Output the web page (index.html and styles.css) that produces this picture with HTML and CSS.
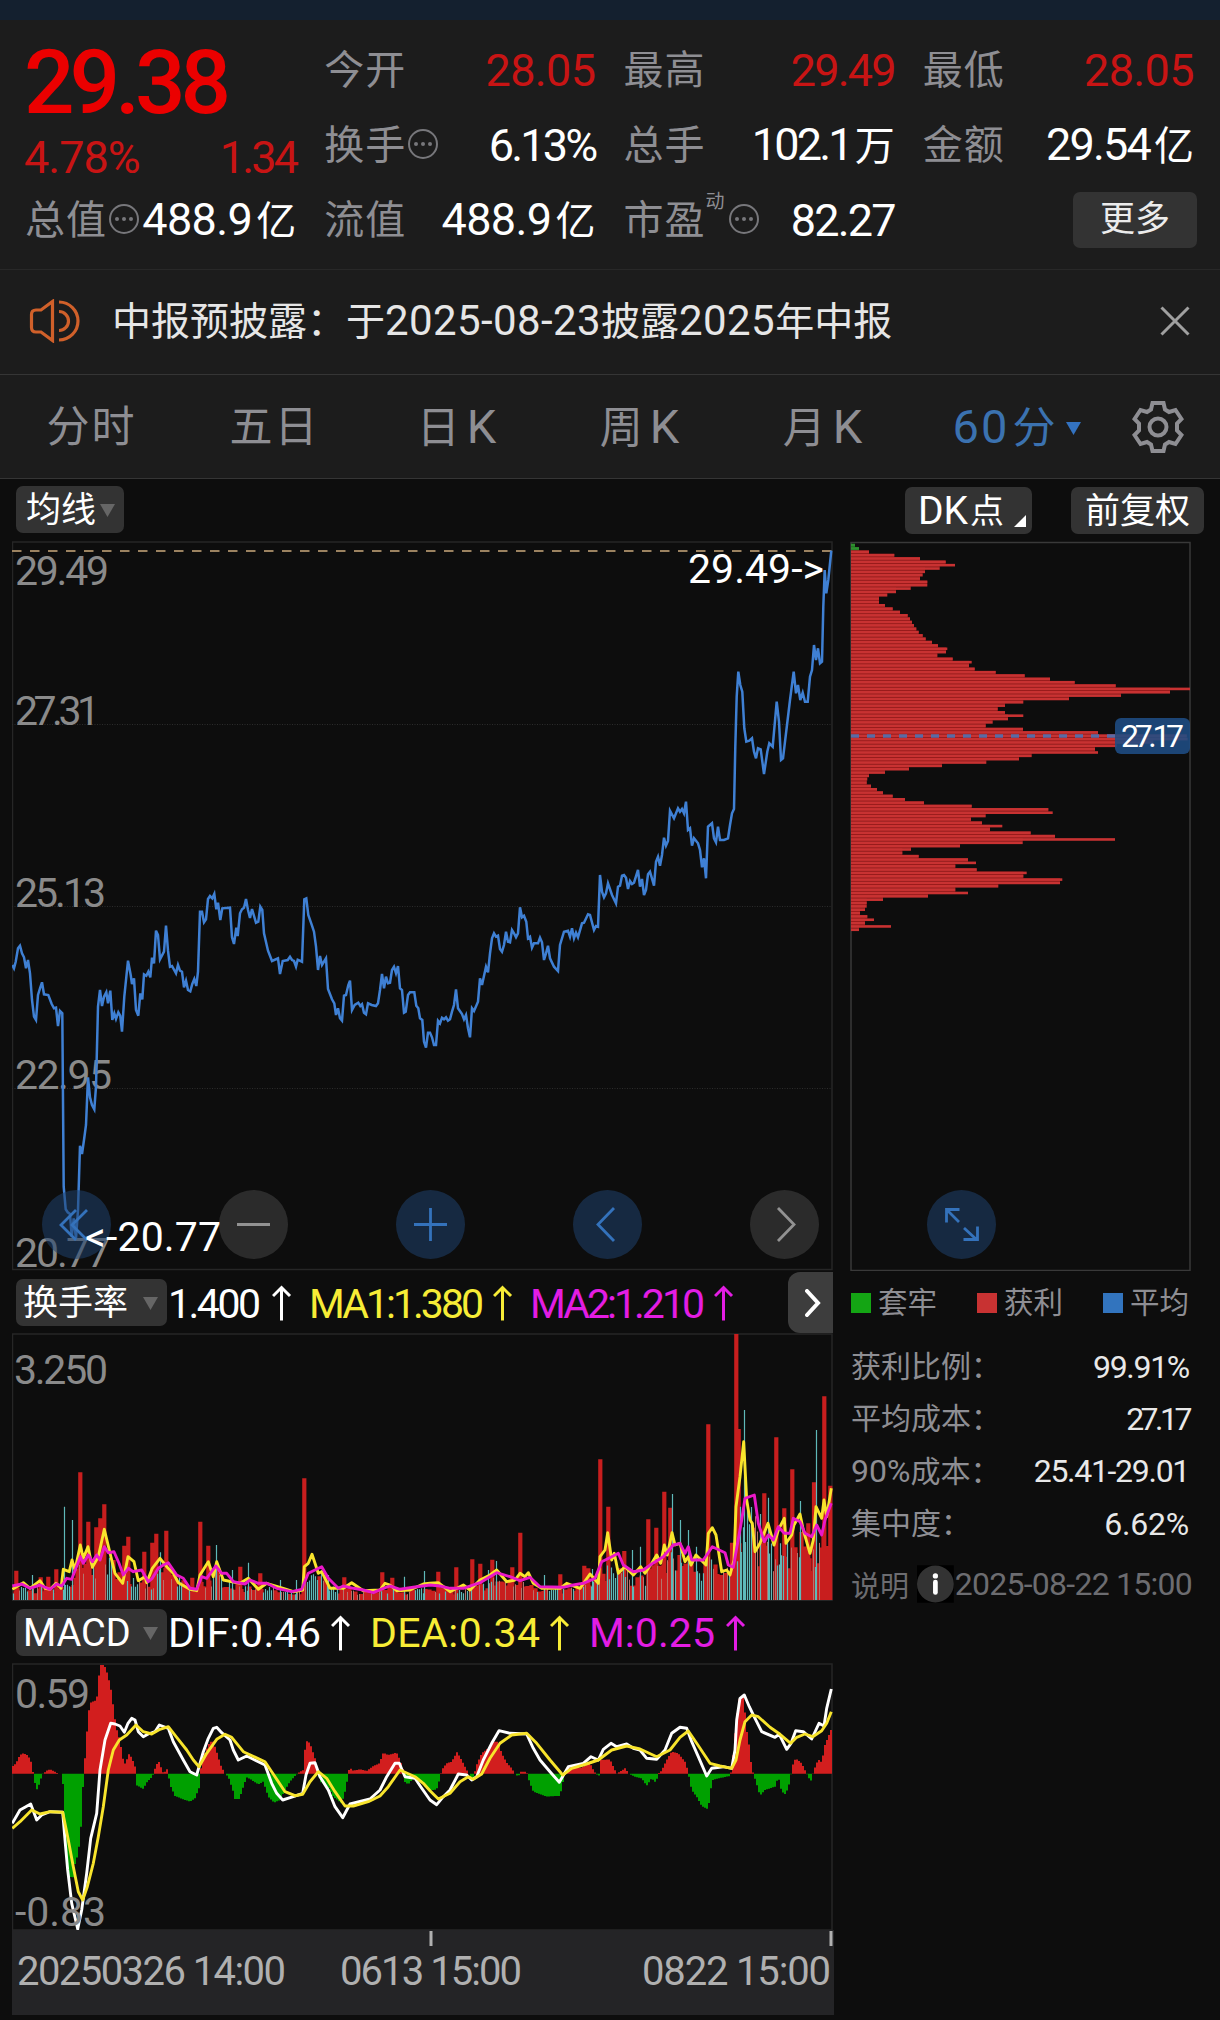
FILE: index.html
```html
<!DOCTYPE html>
<html lang="zh-CN">
<head>
  <meta charset="UTF-8" />
  <meta name="viewport" content="width=device-width, initial-scale=1.0"/>
  <title>60分 K线</title>
  <link rel="stylesheet" href="styles.css">
</head>
<body>
  <div class="status-strip"></div>

  <section class="quote">
    <div class="price-box">
      <div class="price">29.38</div>
      <div class="change"><span>4.78%</span><span class="tight">1.34</span></div>
    </div>
    <div class="cell"><span class="label">今开</span><span class="value up">28.05</span></div>
    <div class="cell"><span class="label">最高</span><span class="value up narrow">29.49</span></div>
    <div class="cell"><span class="label">最低</span><span class="value up">28.05</span></div>
    <div class="cell"><span class="label">换手</span><svg class="dots" viewBox="0 0 32 32"><use href="#dots"/></svg><span class="value tight">6.13%</span></div>
    <div class="cell"><span class="label">总手</span><span class="value tight">102.1<b>万</b></span></div>
    <div class="cell"><span class="label">金额</span><span class="value narrow">29.54<b>亿</b></span></div>
    <div class="cell"><span class="label">总值</span><svg class="dots" viewBox="0 0 32 32"><use href="#dots"/></svg><span class="value">488.9<b>亿</b></span></div>
    <div class="cell"><span class="label">流值</span><span class="value">488.9<b>亿</b></span></div>
    <div class="cell"><span class="label">市盈<sup>动</sup></span><svg class="dots" viewBox="0 0 32 32"><use href="#dots"/></svg><span class="value narrow">82.27</span></div>
    <div class="cell cell-end"><button class="more">更多</button></div>
  </section>

  <section class="notice">
    <svg class="speaker" viewBox="0 0 52 44">
      <path d="M2.5 15.5Q2.5 11 7 11H12L23.5 2.5V41.500L12 33H7Q2.500 33 2.500 28.500Z"/>
      <path d="M30 12.500A9.500 9.500 0 0 1 30 31.500M30 3A19 19 0 0 1 30 41"/>
    </svg>
    <p>中报预披露：于<span>2025-08-23</span>披露<span>2025</span>年中报</p>
    <svg class="close" viewBox="0 0 30 30"><path d="M1.500 1.500L28.500 28.500M28.500 1.500L1.500 28.500"/></svg>
  </section>

  <nav class="tabs">
    <a>分时</a>
    <a>五日</a>
    <a>日<i>K</i></a>
    <a>周<i>K</i></a>
    <a>月<i>K</i></a>
    <a class="active"><i>60</i>分<svg class="caret" viewBox="0 0 15 13"><path d="M0 0H15L7.500 13Z"/></svg></a>
    <svg class="gear" viewBox="0 0 52 52">
      <path d="M20.500 2H31.500L33 8.500L37 11L43.500 9L49.500 18L45 22.500V29.500L49.500 34L43.500 43L37 41L33 43.500L31.500 50H20.500L19 43.500L15 41L8.500 43L2.500 34L7 29.500V22.500L2.500 18L8.500 9L15 11L19 8.500Z"/>
      <circle cx="26" cy="26" r="8.500"/>
    </svg>
  </nav>

  <div class="toolbar">
    <button class="chip">均线<svg class="caret" viewBox="0 0 15 13"><path d="M0 0H15L7.500 13Z"/></svg></button>
    <span class="spacer"></span>
    <button class="chip chip-dk">DK<span>点</span><svg class="corner" viewBox="0 0 12 12"><path d="M12 0V12H0Z"/></svg></button>
    <button class="chip chip-fq">前复权</button>
  </div>

  <main class="panels">
    <div class="charts">
      <div class="price-chart">
        <svg viewBox="12 541 822 730" width="822" height="730">
          <rect class="frame" x="12.500" y="542" width="819.500" height="727.500"/>
          <path class="grid-line" d="M12 724.500H832M12 906.500H832M12 1088.500H832"/>
          <path class="high-line" d="M12 551H832"/>
          <g class="axis">
            <text x="15" y="585" textLength="94">29.49</text>
            <text x="15" y="725" textLength="85">27.31</text>
            <text x="15" y="907" textLength="91">25.13</text>
            <text x="15" y="1089" textLength="97">22.95</text>
            <text x="15" y="1267" textLength="95">20.77</text>
          </g>
          <path id="price" class="price-line"/>
        </svg>
        <div class="controls">
          <button><svg viewBox="0 0 69 69"><path d="M34 20L19 35L34 50M45 20L30 35L45 50"/></svg></button>
          <button class="off"><svg viewBox="0 0 69 69"><path d="M18 34.500H51"/></svg></button>
          <button><svg viewBox="0 0 69 69"><path d="M18 34.500H51M34.500 18V51"/></svg></button>
          <button><svg viewBox="0 0 69 69"><path d="M41 18L25 34.500L41 51"/></svg></button>
          <button class="off"><svg viewBox="0 0 69 69"><path d="M28 18L44 34.500L28 51"/></svg></button>
          <button><svg viewBox="0 0 69 69"><path d="M19.500 32.500V19.500H32.500M20 20L32 32M37 38L50 50M50.500 36.500V49.500H36.500"/></svg></button>
        </div>
        <svg class="marks" viewBox="12 541 822 730" width="822" height="730">
          <text x="688" y="583" textLength="136">29.49-&gt;</text>
          <text x="85" y="1251" textLength="136">&lt;-20.77</text>
        </svg>
      </div>

      <div class="indicator">
        <button class="chip">换手率<svg class="caret" viewBox="0 0 15 13"><path d="M0 0H15L7.500 13Z"/></svg></button>
        <svg class="readout" viewBox="168 1271 600 62" width="600" height="62">
          <text x="168" y="1318" textLength="93">1.400</text><use href="#up" x="272" y="1285"/>
          <g class="yellow"><text x="309" y="1318" textLength="175">MA1:1.380</text><use href="#up" x="493" y="1285"/></g>
          <g class="pink"><text x="530" y="1318" textLength="175">MA2:1.210</text><use href="#up" x="714" y="1285"/></g>
        </svg>
        <button class="next"><svg viewBox="0 0 16 28"><path d="M2 2L13 14L2 26"/></svg></button>
      </div>

      <svg class="block" viewBox="12 1333 822 268" width="822" height="268">
        <rect class="frame" x="12.500" y="1334" width="819.500" height="266.500"/>
        <g class="axis"><text x="14" y="1384" textLength="94">3.250</text></g>
        <path id="vol-up" class="vol-up"/>
        <path id="vol-down" class="vol-down"/>
        <path id="vol-thin" class="vol-thin"/>
        <path id="ma1" class="line yellow-line"/>
        <path id="ma2" class="line pink-line"/>
      </svg>

      <div class="indicator indicator-macd">
        <button class="chip"><em>MACD</em><svg class="caret" viewBox="0 0 15 13"><path d="M0 0H15L7.500 13Z"/></svg></button>
        <svg class="readout" viewBox="168 1601 600 62" width="600" height="62">
          <text x="168" y="1647" textLength="153">DIF:0.46</text><use href="#up" x="331" y="1615"/>
          <g class="yellow"><text x="370" y="1647" textLength="170">DEA:0.34</text><use href="#up" x="550" y="1615"/></g>
          <g class="pink"><text x="589" y="1647" textLength="126">M:0.25</text><use href="#up" x="726" y="1615"/></g>
        </svg>
      </div>

      <svg class="block" viewBox="12 1663 822 267" width="822" height="267">
        <rect class="frame" x="12.500" y="1664" width="819.500" height="266"/>
        <path id="macd-up" class="macd-up"/>
        <path id="macd-down" class="macd-down"/>
        <path id="dif" class="line white-line"/>
        <path id="dea" class="line yellow-line"/>
        <g class="axis">
          <text x="15" y="1708" textLength="75">0.59</text>
          <text x="15" y="1926" textLength="91">-0.83</text>
        </g>
      </svg>

      <svg class="block timeline" viewBox="12 1930 822 85" width="822" height="85">
        <path class="tick" d="M431 1931V1946M831 1931V1946"/>
        <text x="17" y="1985" textLength="269">20250326 14:00</text>
        <text x="340" y="1985" textLength="182">0613 15:00</text>
        <text x="642" y="1985" textLength="189">0822 15:00</text>
      </svg>
    </div>

    <aside class="chips">
      <svg class="block" viewBox="850 541 342 730" width="342" height="730">
        <rect class="chip-frame" x="851" y="542.500" width="339" height="728"/>
        <g id="cost"></g>
        <path class="avg-line" d="M851 736H1116"/>
        <rect class="avg-tag" x="1115" y="718" width="75" height="36" rx="6"/>
        <text class="avg-text" x="1121" y="747" textLength="63">27.17</text>
      </svg>
      <div class="legend">
        <span class="green">套牢</span>
        <span class="red">获利</span>
        <span class="blue">平均</span>
      </div>
      <dl class="stats">
        <dt>获利比例：</dt><dd>99.91%</dd>
        <dt>平均成本：</dt><dd class="tight">27.17</dd>
        <dt><span>90%</span>成本：</dt><dd>25.41-29.01</dd>
        <dt>集中度：</dt><dd class="loose">6.62%</dd>
      </dl>
      <div class="note">
        <span>说明</span>
        <svg viewBox="0 0 39 40"><path d="M0 0H39V40H0Z"/><circle class="disc" cx="19.500" cy="20" r="19.500"/><circle class="dot" cx="19.500" cy="11.500" r="2.800"/><path class="stem" d="M19.500 18V29"/></svg>
        <time>2025-08-22 15:00</time>
      </div>
    </aside>
  </main>

  <svg class="defs">
    <symbol id="dots" viewBox="0 0 32 32"><circle cx="16" cy="16" r="14" fill="none" stroke="currentColor" stroke-width="2"/><circle cx="9" cy="16" r="2"/><circle cx="16" cy="16" r="2"/><circle cx="23" cy="16" r="2"/></symbol>
    <symbol id="up" width="20" height="36" viewBox="0 0 20 36"><path d="M1 11L9.500 2.500L18 11M9.500 3V35.500" fill="none" stroke="currentColor" stroke-width="3"/></symbol>
  </svg>
  <script src="script.js"></script>
</body>
</html>
```
FILE: styles.css
```css
* {
  box-sizing: border-box;
  margin: 0;
  padding: 0;
}

body {
  width: 1220px;
  height: 2020px;
  overflow: hidden;
  background: #0d0d0d;
  color: #fff;
  font-family: Roboto, "Noto Sans CJK SC", sans-serif;
}

button {
  border: none;
  color: inherit;
  font-family: inherit;
}

.defs {
  position: absolute;
  width: 0;
  height: 0;
}

.block {
  display: block;
}

.status-strip {
  height: 20px;
  background: #14202f;
}

/* quote header */
.quote {
  display: grid;
  grid-template-columns: repeat(4, 1fr);
  grid-template-rows: repeat(3, 75px);
  column-gap: 28px;
  height: 250px;
  padding: 13px 26px 0 25px;
  background: #1c1c1c;
  border-bottom: 1px solid #282828;
}

.price-box {
  grid-row: span 2;
}

.price {
  height: 96px;
  line-height: 100px;
  margin-left: -1px;
  font-size: 89px;
  font-weight: 500;
  letter-spacing: -5px;
  color: #eb0000;
}

.change {
  display: flex;
  justify-content: space-between;
  line-height: 58px;
  margin-left: -1px;
  font-size: 45px;
  letter-spacing: -1px;
  color: #c81414;
}

.cell {
  display: flex;
  align-items: center;
  line-height: 75px;
}

.label {
  position: relative;
  font-size: 40px;
  letter-spacing: 1px;
  color: #8e8e93;
}

.label sup {
  position: absolute;
  left: 82px;
  top: -19px;
  font-size: 19px;
}

.dots {
  width: 32px;
  height: 32px;
  margin: 0 0 3px 1px;
  color: #77777b;
  fill: #77777b;
}

.label:has(sup) + .dots {
  margin-left: 22px;
}

.value {
  margin-left: auto;
  font-size: 45px;
  letter-spacing: -0.6px;
  white-space: nowrap;
}

.value b {
  margin-left: 4px;
  font-size: 40px;
  font-weight: 400;
  letter-spacing: 0;
}

.narrow {
  letter-spacing: -1.8px;
}

.change .tight {
  letter-spacing: -2.8px;
}

.value.tight {
  letter-spacing: -2.8px;
}

.up {
  color: #c81414;
}

.cell-end {
  justify-content: flex-end;
  margin-right: -3px;
}

.more {
  width: 124px;
  height: 56px;
  border-radius: 7px;
  background: #333;
  color: #ececec;
  font-size: 35px;
  line-height: 54px;
  margin-bottom: 2px;
}

/* notice */
.notice {
  display: flex;
  align-items: center;
  height: 105px;
  padding: 0 30px 2px 29px;
  background: #1c1c1c;
  border-bottom: 1px solid #353535;
}

.speaker {
  width: 52px;
  height: 44px;
  fill: none;
  stroke: #d0602a;
  stroke-width: 3.2;
}

.notice p {
  margin-left: 31px;
  font-size: 39px;
  line-height: 60px;
  color: #e6e6e6;
}

.notice p span {
  font-size: 42px;
  letter-spacing: 0.4px;
}

.close {
  width: 30px;
  height: 30px;
  margin-left: auto;
  fill: none;
  stroke: #a0a0a0;
  stroke-width: 3;
}

/* period tabs */
.tabs {
  display: grid;
  grid-template-columns: repeat(6, 183px) auto;
  align-items: center;
  height: 104px;
  background: #1c1c1c;
  border-bottom: 1px solid #353535;
}

.tabs a {
  text-align: center;
  font-size: 43px;
  letter-spacing: 2px;
  line-height: 100px;
  padding-top: 1px;
  color: #8e8e93;
}

.tabs i {
  margin-left: 5px;
  font-size: 47px;
  font-style: normal;
}

.tabs .active {
  padding-left: 16px;
  white-space: nowrap;
  color: #3b72b0;
}

.tabs .active i {
  margin-right: 3px;
}

.caret {
  width: 15px;
  height: 13px;
  fill: #666;
}

.tabs .caret {
  margin: 0 0 8px 9px;
  fill: #3372c0;
}

.gear {
  width: 52px;
  height: 52px;
  margin-left: 34px;
  fill: none;
  stroke: #8e8e93;
  stroke-width: 4;
}

/* toolbar */
.toolbar {
  display: flex;
  height: 62px;
  padding: 7px 16px 0;
}

.spacer {
  flex: 1;
}

.chip {
  display: flex;
  align-items: center;
  height: 47px;
  padding: 0 9px 0 10px;
  border-radius: 7px;
  background: #333;
  font-size: 35px;
  line-height: 47px;
}

.toolbar .chip {
  padding-top: 1px;
}

.toolbar .caret {
  margin-left: 4px;
}

.chip-dk {
  position: relative;
  width: 127px;
  margin: 1px 39px 0 0;
  padding-left: 13px;
  font-size: 39px;
}

.chip-dk span {
  margin-left: 2px;
  font-size: 34px;
}

.corner {
  position: absolute;
  right: 6px;
  bottom: 7px;
  width: 12px;
  height: 12px;
  fill: #fff;
}

.chip-fq {
  width: 133px;
  margin-top: 1px;
  padding-left: 14px;
}

/* charts */
.panels {
  display: flex;
  gap: 16px;
  padding-left: 12px;
}

.price-chart {
  position: relative;
  height: 730px;
}

.frame,
.chip-frame {
  fill: none;
  stroke: #262626;
  stroke-width: 1.5;
}

.chip-frame {
  stroke: #393939;
}

.grid-line {
  stroke: #2c2c2c;
  stroke-dasharray: 1 1.500;
}

.high-line {
  stroke: #9b8260;
  stroke-width: 1.8;
  stroke-dasharray: 9.500 8.500;
}

.price-line {
  fill: none;
  stroke: #3f80d4;
  stroke-width: 2.5;
}

.axis text {
  fill: #8a8a8a;
  font-size: 41px;
}

.marks {
  position: absolute;
  left: 0;
  top: 0;
  fill: #fff;
  font-size: 41px;
}

.controls {
  position: absolute;
  left: 30px;
  top: 649px;
  display: flex;
  gap: 108px;
}

.controls button {
  width: 69px;
  height: 69px;
  border-radius: 50%;
  background: rgba(31, 66, 109, 0.55);
}

.controls .off {
  background: rgba(70, 70, 70, 0.55);
}

.controls svg {
  display: block;
  fill: none;
  stroke: #3472bb;
  stroke-width: 2.8;
}

.controls .off svg {
  stroke: #929292;
}

.indicator {
  display: flex;
  width: 821px;
  height: 62px;
}

.indicator .chip {
  width: 151px;
  margin: 8px 1px 0 4px;
  padding: 1px 9px 0 7px;
}

.indicator .caret {
  margin-left: auto;
}

.indicator em {
  font-size: 38px;
  font-style: normal;
}

.readout {
  font-size: 41px;
  fill: #fff;
  color: #fff;
}

.yellow {
  fill: #f7ec36;
  color: #f7ec36;
}

.pink {
  fill: #e31de3;
  color: #e31de3;
}

.next {
  width: 45px;
  height: 61px;
  margin: 1px 0 0 auto;
  border-radius: 12px 0 0 12px;
  background: #3d3d3d;
}

.next svg {
  width: 16px;
  height: 28px;
  margin: 3px 0 0 4px;
  fill: none;
  stroke: #fff;
  stroke-width: 4;
  stroke-linecap: round;
}

.vol-up {
  stroke: #c81e1e;
  stroke-width: 4.2;
}

.vol-down {
  stroke: #5fb9b9;
  stroke-width: 1.2;
}

.vol-thin {
  stroke: #b5726b;
  stroke-width: 1;
}

.line {
  fill: none;
  stroke-width: 2.9;
  stroke-linejoin: round;
}

.yellow-line {
  stroke: #f8e42c;
}

.pink-line {
  stroke: #ea18c8;
}

.white-line {
  stroke: #fff;
}

.macd-up {
  fill: #d21e1e;
}

.macd-down {
  fill: #00a000;
}

.timeline {
  background: #242426;
  fill: #b0b0b0;
  font-size: 40px;
}

.tick {
  stroke: #b0b0b0;
  stroke-width: 3;
}

/* cost distribution */
.chips {
  width: 342px;
}

.avg-line {
  stroke: #5a6ba5;
  stroke-width: 3.5;
  stroke-dasharray: 8 8;
}

.avg-tag {
  fill: #1f4d85;
  fill-opacity: 0.88;
}

.avg-text {
  fill: #fff;
  font-size: 32px;
}

.legend {
  display: flex;
  justify-content: space-between;
  margin: 10px 3px 0 1px;
  line-height: 44px;
  font-size: 29.5px;
  color: #8e8e93;
}

.legend span {
  display: flex;
  align-items: center;
  gap: 7px;
}

.legend span::before {
  content: "";
  width: 20px;
  height: 20px;
}

.legend .green::before {
  background: #14a514;
}

.legend .red::before {
  background: #c83232;
}

.legend .blue::before {
  background: #3274be;
}

.stats {
  display: grid;
  grid-template-columns: auto auto;
  justify-content: space-between;
  margin: 16px 3px 0 1px;
  line-height: 52px;
  font-size: 30px;
}

.stats dt {
  color: #8e8e93;
}

.stats dt span {
  font-size: 32px;
}

.stats dd {
  text-align: right;
  font-size: 32px;
  letter-spacing: -1.3px;
  color: #e8e8e8;
}

.stats .tight {
  letter-spacing: -3.5px;
}

.stats .loose {
  letter-spacing: -0.2px;
}

.note {
  display: flex;
  align-items: center;
  margin: 14px 0 0 1px;
  height: 40px;
  white-space: nowrap;
  font-size: 29px;
  color: #6c6c70;
}

.note svg {
  width: 39px;
  height: 40px;
  margin: 0 1px 0 8px;
}

.note .disc {
  fill: #333;
}

.note .dot {
  fill: #fff;
}

.note .stem {
  stroke: #fff;
  stroke-width: 5;
  stroke-linecap: round;
}

.note time {
  font-size: 32px;
  letter-spacing: -0.75px;
}
```
FILE: script.js
```javascript
// series are "x,y" pairs in thirds of a pixel
function parse(str, dx, dy) {
  return str.trim().split(/\s+/).map(p => {
    const [x, y] = p.split(',').map(Number);
    return [(x + (dx || 0)) / 3, (y + (dy || 0)) / 3];
  });
}

function draw(id, pts) {
  document.getElementById(id).setAttribute('d', 'M' + pts.map(p => p[0].toFixed(1) + ' ' + p[1].toFixed(1)).join('L'));
}

function valueAt(pts, x) {
  for (let i = 1; i < pts.length; i++) {
    if (x <= pts[i][0]) {
      const [a, b] = [pts[i - 1], pts[i]];
      return a[1] + (b[1] - a[1]) * (x - a[0]) / ((b[0] - a[0]) || 1);
    }
  }
  return pts[pts.length - 1][1];
}

// price
const price = [
  ...parse(`37,315 42,325 47,305 54,265 60,257 66,280 72,292 78,325 84,300 90,340 96,420 102,470 108,480 114,405 120,385 126,367 132,403 145,405 155,432 162,445 168,443 174,498 180,453 187,460 191,980 197,1048 203,1057 210,1062 215,1130 221,1075 228,1135 234,1050 240,857 246,882 252,840 258,795 264,652 270,712 276,735 283,748 288,680 294,440 300,390 306,438 312,410 319,397 324,430 331,392 337,480 343,460 348,477 355,457 361,468 366,515 373,410 384,302 392,345 396,372 402,355 408,450 415,467 421,400 427,418 432,343 439,347 445,335 451,352 456,293 462,310 468,212 474,225 480,298 492,275 498,197 504,272 510,320 516,318 528,340 534,315 540,332 546,335 552,382 558,362 564,390 571,394 577,372 583,357 589,378 594,335 600,155 606,155 612,187 618,178 624,117 630,108 637,115 643,102 649,148 654,128 661,180 667,145 690,143 696,232 702,252 709,203 713,228 720,160 726,148 732,143 738,117 744,150 750,174 756,147 768,188 775,185 781,140 787,150 792,220 804,272 816,303 834,295 840,342 848,303 863,300 870,290 876,300 882,303 888,320 893,299 906,305 913,118 919,115 925,165 936,197 942,215 948,260 954,330 960,288 966,315 978,295 984,387 996,418 1003,430 1008,465 1014,445 1020,475 1026,482 1032,407 1038,405 1045,375 1050,362 1056,450 1064,435 1075,428 1081,438 1086,433 1092,458 1098,463 1104,430 1115,435 1128,438 1134,430 1140,390 1146,342 1152,385 1158,350 1164,370 1170,368 1176,330 1182,320 1188,340 1194,318 1200,385 1206,390 1212,458 1217,455 1224,405 1230,397 1243,397 1249,437 1255,445 1260,475 1267,480 1272,545 1278,563 1284,518 1290,518`, 0, 2580),
  ...parse(`6,772 12,795 18,795 24,722 30,730 36,713 42,718 48,712 54,722 60,718 66,695 72,675 78,628 84,685 96,702 102,718 108,705 114,745 120,772 126,685 132,693 144,665 150,595 156,615 168,560 174,577 180,520 186,475 192,460 198,470 204,467 210,507 216,515 222,495 228,455 234,485 240,487 246,450 252,460 258,472 264,460 270,382 276,412 282,407 289,425 294,475 300,470 306,503 312,490 324,490 330,473 336,487 342,540 348,520 354,497 360,535 372,560 384,573 390,495 402,455 414,452 420,470 426,445 432,475 438,458 444,472 456,430 462,428 474,403 480,405 492,450 498,438 504,440 510,285 516,335 522,352 528,340 534,310 546,345 558,370 564,320 570,317 576,287 582,285 588,293 594,327 600,303 606,312 612,308 624,270 630,320 636,297 642,345 648,330 654,283 660,275 672,317 678,245 684,230 690,257 696,225 702,173 708,197 714,183 720,92 732,115 744,85 750,95 756,87 762,100 768,65 774,150 780,145 786,197 792,175 804,190 810,210 816,262 822,235 828,295 834,140 846,130 852,175 858,187 864,140 870,180 882,180 894,175 900,135 906,100 912,87 916,-100 920,-250 925,-325 931,-285 937,-265 943,-155 949,-115 958,-118 966,-125 972,-85 978,-65 984,-95 992,-92 1002,-18 1012,-85 1018,-110 1028,-100 1040,-235 1047,-175 1053,-60 1059,-65 1071,-165 1080,-240 1091,-325 1098,-260 1104,-285 1111,-240 1118,-262 1125,-235 1133,-235 1140,-310 1146,-330 1152,-405 1158,-360 1164,-395 1170,-350 1176,-355 1180,-520 1184,-630 1189,-560 1195,-600 1204,-688`, 1290, 2340)
];
draw('price', price);

// turnover
const ma1 = [
  ...parse(`37,988 70,968 90,985 120,962 135,985 150,988 168,970 183,985 190,928 208,935 216,900 225,930 241,855 250,895 264,860 277,922 295,890 313,808 335,900 345,940 368,970 384,890 402,905 415,962 435,950 440,968 457,925 480,895 500,920 520,940 535,968 570,988 590,992 600,945 625,905 640,950 650,905 670,960 720,970 745,955 775,988 800,970 850,985 880,995 908,990 913,920 925,910 936,883 955,940 965,935 990,985 1030,985 1055,968 1090,992 1140,990 1155,970 1170,975 1190,992 1230,990 1270,972 1290,970`, 0, 3780),
  ...parse(`25,968 60,995 100,975 120,990 150,960 180,945 200,930 230,965 255,960 270,940 285,950 295,938 310,970 335,985 390,985 410,970 450,985 480,942 505,970 510,890 525,870 533,818 545,900 553,880 565,940 585,920 610,945 632,920 645,940 665,910 680,885 692,910 703,855 712,885 726,818 735,855 750,850 765,905 775,890 783,915 798,885 828,915 835,820 847,803 858,825 875,935 890,930 900,945 912,900 918,740 930,650 941,545 950,720 960,780 967,790 975,875 990,850 1014,790 1032,855 1045,810 1063,775 1068,850 1085,825 1092,795 1110,762 1120,810 1140,880 1150,840 1158,740 1175,775 1182,720 1190,770 1204,685`, 1290, 3780)
];
const ma2 = [
  ...parse(`37,978 65,972 90,985 120,975 150,988 170,972 185,978 200,955 215,958 241,890 250,910 265,885 277,905 290,885 300,900 313,860 325,878 342,875 357,910 370,945 385,925 400,935 425,930 445,965 457,955 475,925 490,915 505,908 530,945 550,955 570,985 590,988 605,950 620,955 647,918 665,940 680,940 700,965 735,972 750,960 775,970 800,970 830,985 875,995 905,988 925,940 965,920 985,955 1015,985 1030,978 1060,985 1090,990 1120,998 1150,985 1170,978 1200,988 1240,982 1290,975`, 0, 3780),
  ...parse(`30,978 60,985 100,985 150,968 200,938 240,950 270,962 300,952 330,980 400,982 430,975 460,970 495,955 515,905 545,890 565,880 580,915 610,935 640,930 665,912 700,890 730,855 750,850 765,880 775,860 785,900 820,900 847,860 885,878 895,915 910,922 935,780 945,715 973,705 985,790 1003,845 1015,825 1030,840 1045,800 1063,820 1080,820 1090,775 1110,785 1125,820 1145,830 1160,795 1175,825 1185,780 1204,730`, 1290, 3780)
];
draw('ma1', ma1);
draw('ma2', ma2);

const upBars = [
  ...parse(`49,932 122,952 145,950 169,928 241,637 265,785 289,802 301,775 313,733 373,857 385,830 433,875 457,848 469,821 499,812 577,953 601,785 625,857 721,920 781,940 913,655 1033,952 1147,937 1177,953`, 0, 3780),
  ...parse(`25,935 79,922 127,898 151,911 187,899 247,922 271,818 391,943 463,917 475,925 511,598 535,740 583,873 655,778 679,803 703,695 721,743 835,493 906,848 919,222 926,507 1003,700 1039,532 1063,745 1087,628 1135,790 1152,667 1183,409 1201,677`, 1290, 3780)
];
const downBars = [
  ...parse(`97,945 193,740 217,780 481,877 649,855 697,930 745,908 842,960 889,960 985,945 1213,950 1273,933`, 0, 3780),
  ...parse(`175,930 200,903 344,945 487,927 607,870 631,860 727,702 751,780 775,810 799,860 931,740 943,450 991,762 1015,713 1051,850 1111,723 1159,510`, 1290, 3780)
];
// stretches where the falling bars dominate
const falling = [[20, 28], [63, 70], [176, 182], [263, 272], [306, 317], [327, 338], [415, 424], [457, 464], [550, 558], [590, 593], [609, 617], [696, 704], [740, 752], [777, 783]];

let seed = 7;
function rnd() {
  seed = (seed * 16807) % 2147483647;
  return seed / 2147483647;
}

const base = 1600;
let up = '', down = '', thin = '';
for (let x = 13; x < 831; x += 2) {
  const h = (base - valueAt(ma2, x)) * (0.45 + rnd() * 0.5);
  const bar = `M${x + 0.5} ${base}V${(base - h).toFixed(1)}`;
  const r = rnd();
  if (falling.some(f => x >= f[0] && x <= f[1])) down += bar;
  else if (r < 0.58) up += bar;
  else if (r < 0.82) thin += bar;
  else down += bar;
}
upBars.forEach(b => { up += `M${b[0].toFixed(1)} ${base}V${b[1].toFixed(1)}`; });
downBars.forEach(b => { down += `M${Math.floor(b[0]) + 0.5} ${base}V${b[1].toFixed(1)}`; });
document.getElementById('vol-up').setAttribute('d', up);
document.getElementById('vol-down').setAttribute('d', down);
document.getElementById('vol-thin').setAttribute('d', thin);

// MACD
const hist = [
  ...parse(`37,500 48,490 60,465 70,460 82,465 92,480 100,521 104,545 110,570 118,552 126,525 130,521 140,512 150,508 165,515 175,521 185,521 190,560 196,760 205,830 220,832 224,795 235,760 241,700 247,640 250,521 252,515 258,435 265,340 272,308 290,300 300,195 313,195 322,220 332,262 340,320 348,380 357,412 366,455 372,497 380,480 388,460 398,480 408,508 409,555 430,567 440,548 458,528 460,521 467,500 476,483 488,515 492,521 499,508 505,508 506,521 508,550 525,588 550,598 570,605 585,595 598,562 602,510 610,470 630,425 640,425 650,455 662,495 675,521 685,530 700,575 705,597 718,597 730,560 740,532 755,540 775,553 790,545 805,590 822,608 840,600 855,570 870,545 885,528 900,515 910,510 912,465 920,423 930,430 945,475 952,510 960,545 985,560 1000,590 1025,610 1035,575 1045,525 1048,502 1060,512 1080,508 1100,513 1120,498 1138,490 1150,458 1165,465 1190,458 1200,480 1210,510 1214,545 1225,553 1240,535 1260,540 1275,560 1290,572`, 0, 4800),
  ...parse(`20,568 30,535 35,510 50,490 65,485 81,457 95,480 110,510 117,521 125,538 132,525 140,495 155,460 180,440 190,425 205,425 215,460 230,488 245,505 255,521 265,530 272,515 290,515 292,525 300,550 310,575 330,582 350,590 375,588 390,588 398,550 405,521 408,505 430,500 450,505 480,490 490,510 497,521 508,527 510,480 540,478 550,500 560,521 575,512 585,505 597,521 615,530 635,535 650,557 665,535 678,548 685,521 695,512 710,480 725,455 745,460 765,485 775,515 777,530 785,570 800,590 815,618 835,628 840,580 848,540 865,535 890,530 900,528 905,510 915,400 925,300 940,285 950,390 958,440 965,505 970,521 978,545 990,587 1005,570 1035,560 1045,530 1055,575 1067,583 1080,545 1086,500 1097,475 1115,490 1130,521 1142,545 1152,510 1165,478 1175,487 1185,435 1195,410 1205,385`, 1290, 4800)
];
const zero = 1773.7;
let pos = '', neg = '';
for (let x = 12; x < 832; x += 2) {
  const y = valueAt(hist, x + 1);
  const rect = `M${x} ${zero}V${y.toFixed(1)}h2V${zero}Z`;
  if (y < zero) pos += rect;
  else neg += rect;
}
document.getElementById('macd-up').setAttribute('d', pos);
document.getElementById('macd-down').setAttribute('d', neg);

draw('dif', [
  ...parse(`37,670 60,630 92,612 110,660 125,645 150,635 188,637 195,720 203,810 215,910 233,987 245,930 260,820 272,715 290,640 300,510 315,420 332,370 345,372 360,378 373,397 384,370 395,355 405,360 415,395 430,410 445,402 465,395 478,375 505,385 520,425 550,480 570,515 590,525 600,490 610,455 625,415 640,385 650,382 665,398 690,420 700,450 715,480 740,468 760,478 795,495 815,550 830,580 848,600 880,590 908,580 918,525 930,490 945,488 960,530 985,570 1005,620 1028,653 1050,612 1110,597 1140,570 1160,530 1185,490 1198,490 1215,530 1245,535 1262,560 1290,600`, 0, 4800),
  ...parse(`20,614 40,590 60,570 85,522 110,525 125,540 140,530 160,480 185,430 207,392 240,400 290,402 310,445 330,480 360,515 388,547 415,500 460,490 483,470 505,480 520,448 543,430 560,440 590,432 610,445 630,450 650,475 680,478 705,450 725,400 750,382 770,385 785,425 805,470 830,528 845,505 880,500 905,505 915,450 920,360 930,295 943,285 958,320 975,355 995,395 1035,412 1048,403 1070,448 1083,430 1097,392 1120,395 1145,417 1167,370 1182,378 1190,325 1204,267`, 1290, 4800)
]);
draw('dea', [
  ...parse(`37,685 60,665 95,630 120,642 150,635 188,637 205,720 220,800 235,875 248,900 262,860 280,790 295,710 310,620 325,510 340,450 358,420 380,405 408,375 430,395 455,402 480,388 505,380 530,412 560,450 580,480 597,500 620,460 650,418 675,403 695,412 730,455 795,485 815,515 855,575 885,587 908,583 930,545 955,515 980,535 1005,575 1035,618 1060,618 1105,605 1140,588 1165,560 1200,510 1245,530 1270,550 1290,572`, 0, 4800),
  ...parse(`25,597 60,580 90,545 115,530 130,538 155,522 180,475 210,430 245,405 290,400 320,430 360,480 398,525 425,505 460,495 505,480 545,450 590,438 630,447 680,470 720,450 750,412 775,393 800,430 840,490 870,498 905,505 918,480 930,420 945,365 965,345 985,350 1020,382 1050,403 1082,430 1100,412 1125,402 1148,410 1175,392 1190,370 1204,335`, 1290, 4800)
]);

// cost distribution, first two rows are above the current price
const cost = [12, 24, 54, 130, 207, 284, 312, 266, 222, 215, 207, 229, 229, 179, 135, 109, 84, 84, 102, 125, 147, 170, 177, 183, 189, 196, 203, 215, 224, 243, 261, 289, 285, 259, 305, 362, 354, 371, 434, 521, 597, 671, 794, 1017, 957, 810, 654, 517, 462, 440, 462, 517, 471, 425, 404, 516, 741, 1007, 1010, 907, 797, 732, 741, 542, 504, 406, 273, 174, 102, 54, 49, 47, 60, 78, 96, 125, 162, 219, 362, 592, 605, 404, 360, 393, 454, 417, 539, 612, 792, 515, 327, 180, 154, 203, 351, 375, 313, 377, 527, 517, 634, 627, 442, 313, 351, 231, 96, 47, 47, 42, 27, 49, 69, 42, 120, 24];
let rows = '';
cost.forEach((w, i) => {
  const y = 543.8 + i * 3.345;
  const under = i < 2 ? '#1c6a1c' : '#8c1717';
  const fill = i < 2 ? '#2f8f2f' : '#c83232';
  rows += `<rect x="851" y="${y.toFixed(2)}" width="${(Math.min(w, cost[i + 1] || 0) / 3).toFixed(1)}" height="3.6" fill="${under}"/>`;
  rows += `<rect x="851" y="${y.toFixed(2)}" width="${(w / 3).toFixed(1)}" height="2.6" fill="${fill}"/>`;
});
document.getElementById('cost').innerHTML = rows;
```
